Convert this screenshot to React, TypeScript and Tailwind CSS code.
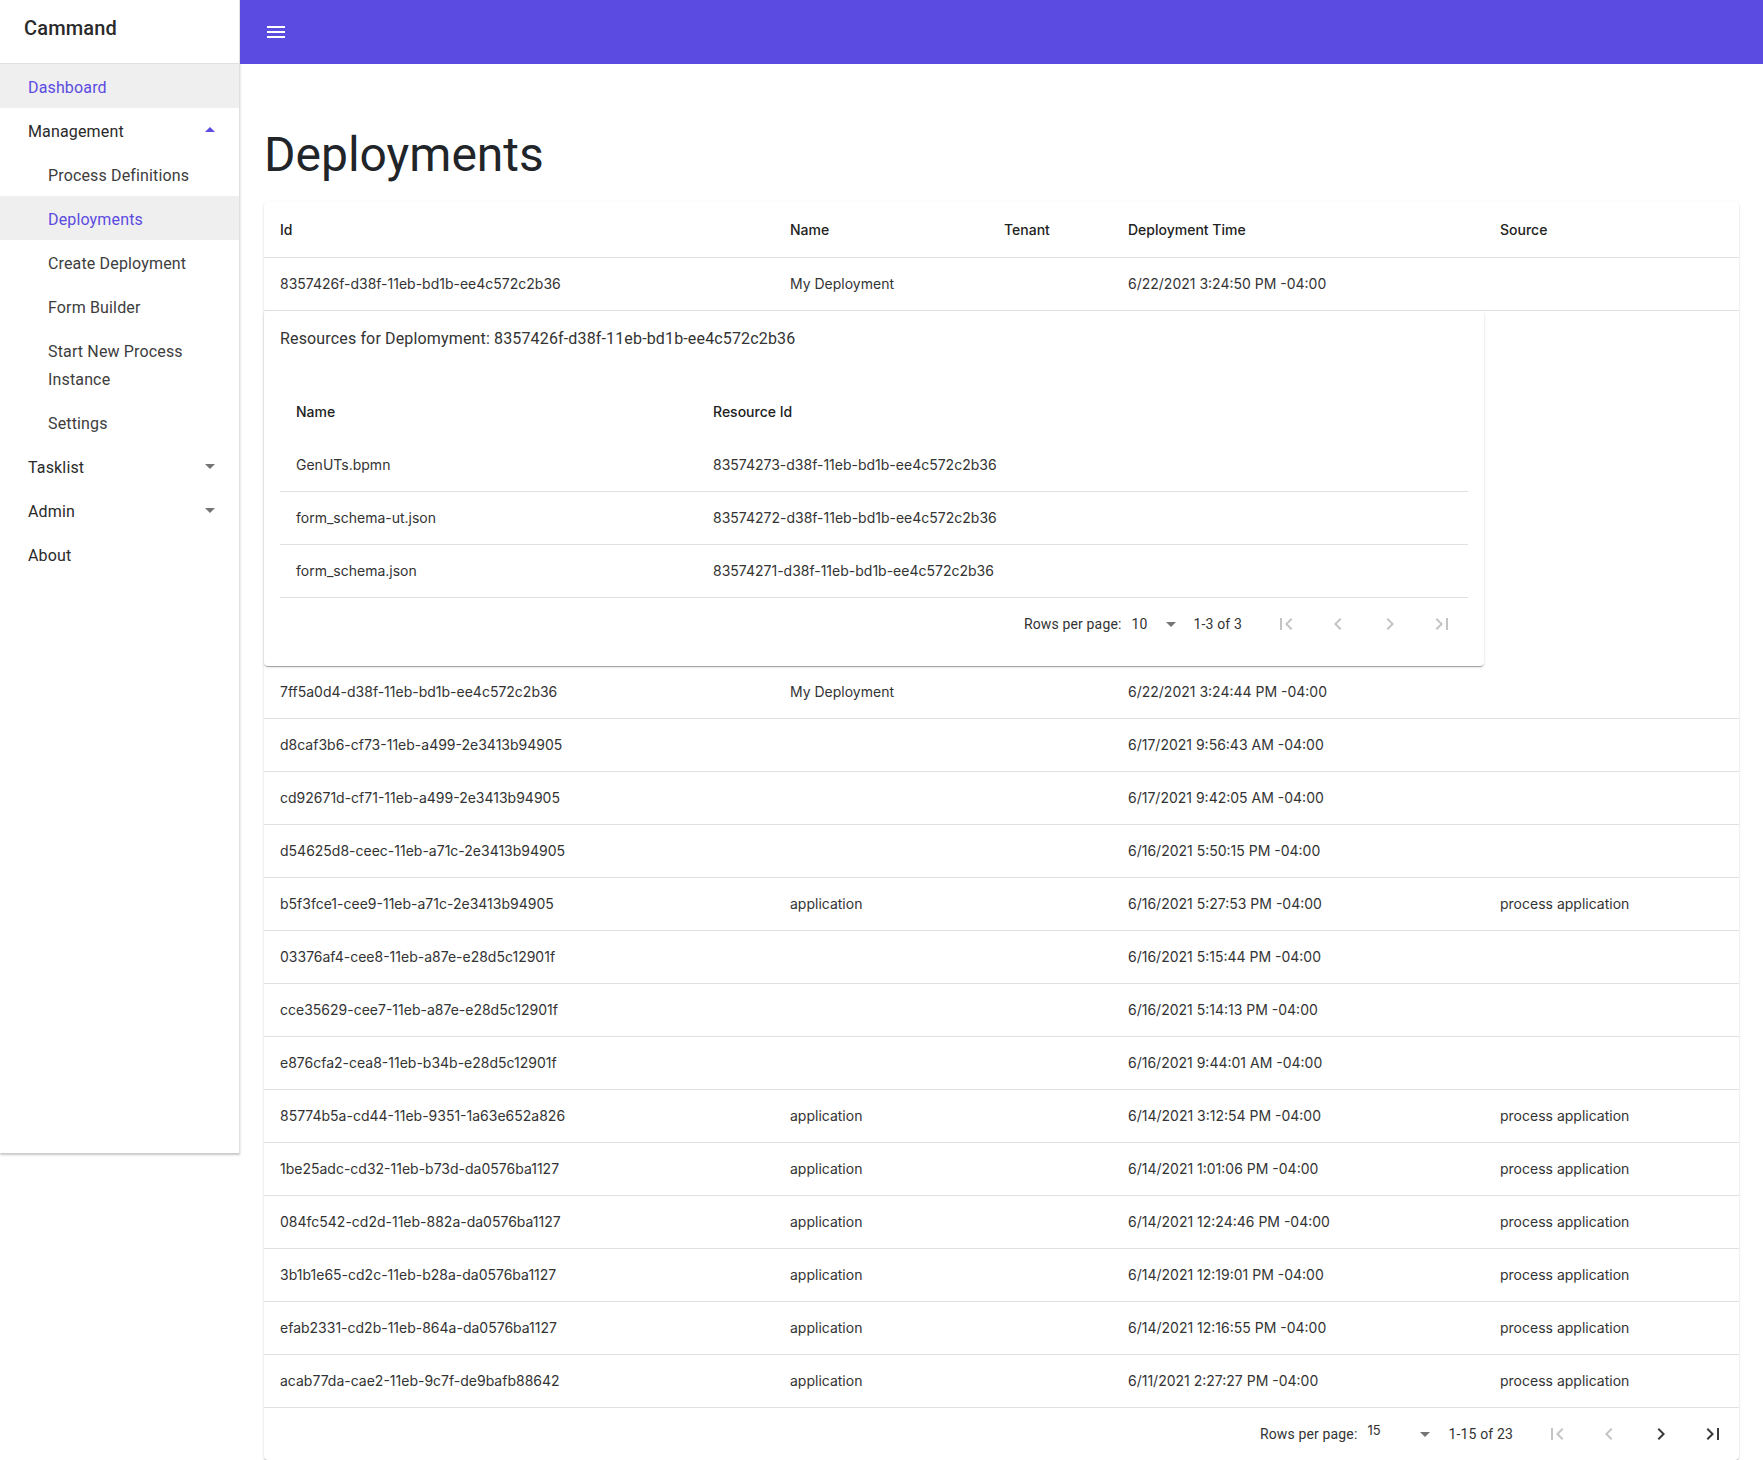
import React from "react";

const P = {
  first: "M18.41 16.59L13.82 12l4.59-4.59L17 6l-6 6 6 6zM6 6h2v12H6z",
  prev: "M15.41 7.41L14 6l-6 6 6 6 1.41-1.41L10.83 12z",
  next: "M10 6L8.59 7.41 13.17 12l-4.58 4.59L10 18l6-6z",
  last: "M5.59 7.41L10.18 12l-4.59 4.59L7 18l6-6-6-6zM16 6h2v12h-2z",
  down: "M7 10l5 5 5-5z",
  up: "M7 14l5-5 5 5z",
  menu: "M3 18h18v-2H3v2zm0-5h18v-2H3v2zm0-7v2h18V6H3z",
};

function Icon({ d, className }: { d: string; className?: string }) {
  return (
    <svg viewBox="0 0 24 24" width="24" height="24" className={className} fill="currentColor">
      <path d={d} />
    </svg>
  );
}

type Row = { id: string; name: string; time: string; source: string };

const rows: Row[] = [
  { id: "7ff5a0d4-d38f-11eb-bd1b-ee4c572c2b36", name: "My Deployment", time: "6/22/2021 3:24:44 PM -04:00", source: "" },
  { id: "d8caf3b6-cf73-11eb-a499-2e3413b94905", name: "", time: "6/17/2021 9:56:43 AM -04:00", source: "" },
  { id: "cd92671d-cf71-11eb-a499-2e3413b94905", name: "", time: "6/17/2021 9:42:05 AM -04:00", source: "" },
  { id: "d54625d8-ceec-11eb-a71c-2e3413b94905", name: "", time: "6/16/2021 5:50:15 PM -04:00", source: "" },
  { id: "b5f3fce1-cee9-11eb-a71c-2e3413b94905", name: "application", time: "6/16/2021 5:27:53 PM -04:00", source: "process application" },
  { id: "03376af4-cee8-11eb-a87e-e28d5c12901f", name: "", time: "6/16/2021 5:15:44 PM -04:00", source: "" },
  { id: "cce35629-cee7-11eb-a87e-e28d5c12901f", name: "", time: "6/16/2021 5:14:13 PM -04:00", source: "" },
  { id: "e876cfa2-cea8-11eb-b34b-e28d5c12901f", name: "", time: "6/16/2021 9:44:01 AM -04:00", source: "" },
  { id: "85774b5a-cd44-11eb-9351-1a63e652a826", name: "application", time: "6/14/2021 3:12:54 PM -04:00", source: "process application" },
  { id: "1be25adc-cd32-11eb-b73d-da0576ba1127", name: "application", time: "6/14/2021 1:01:06 PM -04:00", source: "process application" },
  { id: "084fc542-cd2d-11eb-882a-da0576ba1127", name: "application", time: "6/14/2021 12:24:46 PM -04:00", source: "process application" },
  { id: "3b1b1e65-cd2c-11eb-b28a-da0576ba1127", name: "application", time: "6/14/2021 12:19:01 PM -04:00", source: "process application" },
  { id: "efab2331-cd2b-11eb-864a-da0576ba1127", name: "application", time: "6/14/2021 12:16:55 PM -04:00", source: "process application" },
  { id: "acab77da-cae2-11eb-9c7f-de9bafb88642", name: "application", time: "6/11/2021 2:27:27 PM -04:00", source: "process application" },
];

const resources = [
  { name: "GenUTs.bpmn", id: "83574273-d38f-11eb-bd1b-ee4c572c2b36" },
  { name: "form_schema-ut.json", id: "83574272-d38f-11eb-bd1b-ee4c572c2b36" },
  { name: "form_schema.json", id: "83574271-d38f-11eb-bd1b-ee4c572c2b36" },
];

function Pagination({
  value,
  range,
  selectW,
  nextEnabled,
  raised,
}: {
  value: string;
  range: string;
  selectW: string;
  nextEnabled: boolean;
  raised?: boolean;
}) {
  const off = "text-[#c4c4c4]";
  const on = "text-[#3a3a3a]";
  return (
    <div className="flex h-[52px] items-center justify-end font-['Roboto'] text-[14px] tracking-[0.01071em] text-[#333]">
      <span>Rows per page:</span>
      <span className={`ml-[10px] flex items-center justify-between ${selectW}`}>
        <span className={raised ? "-translate-y-[3px] font-['Inter'] text-[13px] tracking-normal" : ""}>{value}</span>
        <Icon d={P.down} className="text-[#757575]" />
      </span>
      <span className="ml-[11px]">{range}</span>
      <div className="ml-[18px] flex">
        <span className={`flex h-[48px] w-[52px] items-center justify-center ${off}`}>
          <Icon d={P.first} />
        </span>
        <span className={`flex h-[48px] w-[52px] items-center justify-center ${off}`}>
          <Icon d={P.prev} />
        </span>
        <span className={`flex h-[48px] w-[52px] items-center justify-center ${nextEnabled ? on : off}`}>
          <Icon d={P.next} />
        </span>
        <span className={`flex h-[48px] w-[52px] items-center justify-center ${nextEnabled ? on : off}`}>
          <Icon d={P.last} />
        </span>
      </div>
    </div>
  );
}

function NavItem({
  label,
  sub,
  active,
  arrow,
}: {
  label: string;
  sub?: boolean;
  active?: boolean;
  arrow?: "up" | "down";
}) {
  return (
    <div
      className={`flex items-center justify-between pb-[6px] pt-[10px] pr-[17px] ${sub ? "pl-[48px]" : "pl-[28px]"} ${
        active ? "bg-[#efefef]" : ""
      }`}
    >
      <span
        className={`text-[16px] leading-[28px] tracking-[0.00938em] ${
          active ? "text-[#5b4be0]" : sub ? "text-[#3d3d3d]" : "text-[#2a2a2a]"
        }`}
      >
        {label}
      </span>
      {arrow === "up" && <Icon d={P.up} className="-mt-[4px] text-[#5b4be0]" />}
      {arrow === "down" && <Icon d={P.down} className="-mt-[4px] text-[#757575]" />}
    </div>
  );
}

export default function App() {
  const cardShadow =
    "shadow-[0_2px_1px_-1px_rgba(0,0,0,0.2),0_1px_1px_0_rgba(0,0,0,0.14),0_1px_3px_0_rgba(0,0,0,0.12)]";
  return (
    <div className="flex min-h-[1460px] w-full bg-white font-['Roboto']">
      <aside className="h-[1153px] w-[240px] shrink-0 border-r border-[#e0e0e0] bg-white shadow-[0_2px_2px_rgba(0,0,0,0.22)]">
        <div className="h-[64px] border-b border-[#e0e0e0] pl-[24px] pt-[12px]">
          <span className="text-[20px] font-medium leading-[32px] tracking-[0.0075em] text-[#2a2a2a]">Cammand</span>
        </div>
        <nav>
          <NavItem label="Dashboard" active />
          <NavItem label="Management" arrow="up" />
          <NavItem label="Process Definitions" sub />
          <NavItem label="Deployments" sub active />
          <NavItem label="Create Deployment" sub />
          <NavItem label="Form Builder" sub />
          <NavItem label="Start New Process Instance" sub />
          <NavItem label="Settings" sub />
          <NavItem label="Tasklist" arrow="down" />
          <NavItem label="Admin" arrow="down" />
          <NavItem label="About" />
        </nav>
      </aside>

      <div className="flex min-w-0 flex-1 flex-col">
        <header className="flex h-[64px] items-center bg-[#5b4be0] pl-[24px]">
          <Icon d={P.menu} className="text-white" />
        </header>
        <main className="px-[24px] pt-[63px]">
          <h1 className="mb-[19px] text-[48px] font-normal leading-[56px] text-[#212529]">Deployments</h1>
          <div className={`rounded-[4px] bg-white ${cardShadow}`}>
            <table className="w-full table-fixed border-collapse font-['Inter'] text-[14px] text-[#333]">
              <colgroup>
                <col className="w-[510px]" />
                <col className="w-[214px]" />
                <col className="w-[124px]" />
                <col className="w-[372px]" />
                <col />
              </colgroup>
              <thead>
                <tr>
                  {["Id", "Name", "Tenant", "Deployment Time", "Source"].map((h) => (
                    <th
                      key={h}
                      className="border-b border-[#e0e0e0] px-4 py-4 text-left font-medium leading-[23px] text-[#222]"
                    >
                      {h}
                    </th>
                  ))}
                </tr>
              </thead>
              <tbody>
                <tr>
                  <td className="border-b border-[#e0e0e0] px-4 py-4 leading-5">8357426f-d38f-11eb-bd1b-ee4c572c2b36</td>
                  <td className="border-b border-[#e0e0e0] px-4 py-4 leading-5">My Deployment</td>
                  <td className="border-b border-[#e0e0e0] px-4 py-4 leading-5"></td>
                  <td className="border-b border-[#e0e0e0] px-4 py-4 leading-5">6/22/2021 3:24:50 PM -04:00</td>
                  <td className="border-b border-[#e0e0e0] px-4 py-4 leading-5"></td>
                </tr>
                <tr>
                  <td colSpan={4} className="p-0">
                    <div className={`rounded-[4px] bg-white p-4 ${cardShadow}`}>
                      <div className="font-['Roboto'] text-[16px] leading-6 tracking-[0.00938em] text-[#333]">
                        Resources for Deplomyment: 8357426f-d38f-11eb-bd1b-ee4c572c2b36
                      </div>
                      <table className="mt-[34px] w-full table-fixed border-collapse">
                        <colgroup>
                          <col className="w-[417px]" />
                          <col />
                        </colgroup>
                        <thead>
                          <tr>
                            <th className="px-4 py-4 text-left font-medium leading-[22px] text-[#222]">Name</th>
                            <th className="px-4 py-4 text-left font-medium leading-[22px] text-[#222]">Resource Id</th>
                          </tr>
                        </thead>
                        <tbody>
                          {resources.map((r) => (
                            <tr key={r.id}>
                              <td className="border-b border-[#e0e0e0] px-4 py-4 leading-5">{r.name}</td>
                              <td className="border-b border-[#e0e0e0] px-4 py-4 leading-5">{r.id}</td>
                            </tr>
                          ))}
                        </tbody>
                      </table>
                      <Pagination value="10" range="1-3 of 3" selectW="w-[51px]" nextEnabled={false} />
                    </div>
                  </td>
                  <td className="p-0"></td>
                </tr>
                {rows.map((r) => (
                  <tr key={r.id}>
                    <td className="border-b border-[#e0e0e0] px-4 py-4 leading-5">{r.id}</td>
                    <td className="border-b border-[#e0e0e0] px-4 py-4 leading-5">{r.name}</td>
                    <td className="border-b border-[#e0e0e0] px-4 py-4 leading-5"></td>
                    <td className="border-b border-[#e0e0e0] px-4 py-4 leading-5">{r.time}</td>
                    <td className="border-b border-[#e0e0e0] px-4 py-4 leading-5">{r.source}</td>
                  </tr>
                ))}
              </tbody>
            </table>
            <Pagination value="15" range="1-15 of 23" selectW="w-[70px]" nextEnabled raised />
          </div>
        </main>
      </div>
    </div>
  );
}
